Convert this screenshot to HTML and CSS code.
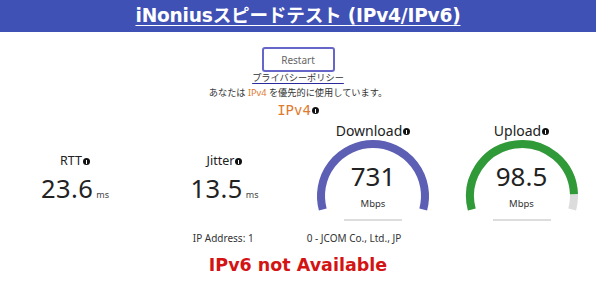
FILE: index.html
```html
<!DOCTYPE html>
<html lang="ja">
<head>
<meta charset="utf-8">
<title>iNonius</title>
<link rel="stylesheet" href="styles.css">
</head>
<body>
<header class="top">
  <a class="title">iNoniusスピードテスト (IPv4/IPv6)</a>
</header>
<main class="main">
  <button class="restart">Restart</button>
  <a class="privacy">プライバシーポリシー</a>
  <p class="pref">あなたは <span class="orange">IPv4</span> を優先的に使用しています。</p>
  <div class="proto">IPv4<span class="info"></span></div>
  <section class="metrics">
    <div class="stat">
      <div class="label">RTT<span class="info"></span></div>
      <div class="value"><span class="num">23.6</span><span class="unit">ms</span></div>
    </div>
    <div class="stat">
      <div class="label">Jitter<span class="info"></span></div>
      <div class="value"><span class="num">13.5</span><span class="unit">ms</span></div>
    </div>
    <div class="gauge">
      <div class="glabel">Download<span class="info"></span></div>
      <div class="dial">
        <svg width="120" height="76" viewBox="0 0 120 76">
          <path d="M 9.77 70.46 A 52 52 0 1 1 110.23 70.46" fill="none" stroke="#5c5fb3" stroke-width="8"/>
        </svg>
        <div class="gnum">731</div>
        <div class="gunit">Mbps</div>
      </div>
      <div class="gbar"></div>
    </div>
    <div class="gauge">
      <div class="glabel">Upload<span class="info"></span></div>
      <div class="dial">
        <svg width="120" height="76" viewBox="0 0 120 76">
          <path d="M 9.77 70.46 A 52 52 0 1 1 110.23 70.46" fill="none" stroke="#dcdcdc" stroke-width="8"/>
          <path d="M 9.77 70.46 A 52 52 0 1 1 111.97 55.19" fill="none" stroke="#2f9a37" stroke-width="8"/>
        </svg>
        <div class="gnum">98.5</div>
        <div class="gunit">Mbps</div>
      </div>
      <div class="gbar"></div>
    </div>
  </section>
  <p class="ip">IP Address: 1<span class="redact"></span>0 - JCOM Co., Ltd., JP</p>
  <p class="v6">IPv6 not Available</p>
</main>
</body>
</html>
```
FILE: styles.css
```css
html, body {
  margin: 0;
  padding: 0;
  background: #fff;
}
body {
  font-family: "Noto Sans", "Noto Sans CJK JP", sans-serif;
  color: #222;
  width: 596px;
  height: 293px;
  overflow: hidden;
}
.top {
  background: #3f51b5;
  height: 32px;
  display: flex;
  justify-content: center;
  align-items: center;
}
.title {
  color: #fff;
  font-family: "DejaVu Sans", "Noto Sans CJK JP", sans-serif;
  font-weight: bold;
  font-size: 18.6px;
  line-height: 22px;
  text-decoration: underline;
  text-decoration-thickness: 1px;
  text-underline-offset: 3px;
  letter-spacing: -0.2px;
}
.main {
  display: flex;
  flex-direction: column;
  align-items: center;
}
.restart {
  margin-top: 15px;
  width: 73px;
  height: 25px;
  border: 2px solid #6666c8;
  border-radius: 3px;
  background: #fff;
  color: #666;
  font-family: "Noto Sans", sans-serif;
  font-size: 10px;
  padding: 0;
}
.privacy {
  font-size: 9.2px;
  line-height: 12px;
  color: #333;
  text-decoration: underline;
  text-decoration-color: #2a2a9a;
  text-underline-offset: 2px;
}
.pref {
  margin: 3px 0 0;
  font-size: 9.2px;
  line-height: 12px;
  color: #333;
}
.orange { color: #e07a30; }
.proto {
  margin-top: 2px;
  font-family: "DejaVu Sans Mono", "Liberation Mono", monospace;
  font-size: 14px;
  line-height: 18px;
  color: #e07a30;
  display: flex;
  align-items: center;
}
.info {
  display: inline-block;
  width: 7px;
  height: 7px;
  border-radius: 50%;
  background: #111;
  margin-left: 1px;
  position: relative;
  vertical-align: middle;
}
.info::after {
  content: "";
  position: absolute;
  left: 3px;
  top: 2px;
  width: 1px;
  height: 4px;
  background: #fff;
}
.metrics {
  margin-top: 4px;
  width: 596px;
  display: grid;
  grid-template-columns: 150px 149px 148px 149px;
}
.stat {
  padding-top: 30px;
  display: flex;
  flex-direction: column;
  align-items: center;
}
.label {
  font-size: 12.5px;
  line-height: 16px;
  display: flex;
  align-items: center;
}
.value {
  margin-top: 6px;
  display: flex;
  align-items: baseline;
}
.num {
  font-size: 25.5px;
  line-height: 26px;
  letter-spacing: 0.4px;
}
.unit {
  font-size: 9px;
  margin-left: 3px;
  color: #444;
}
.gauge {
  display: flex;
  flex-direction: column;
  align-items: center;
}
.glabel {
  font-size: 14px;
  line-height: 16px;
  display: flex;
  align-items: center;
}
.dial {
  position: relative;
  width: 120px;
  height: 76px;
}
.dial svg { display: block; }
.gnum {
  position: absolute;
  left: 0;
  right: 0;
  top: 23px;
  text-align: center;
  font-size: 26px;
  line-height: 28px;
}
.gunit {
  position: absolute;
  left: 0;
  right: 0;
  top: 58px;
  text-align: center;
  font-size: 9.5px;
  line-height: 14px;
  color: #333;
}
.gbar {
  margin-top: 4px;
  width: 58px;
  height: 2px;
  background: #ddd;
}
.ip {
  margin: 10px 0 0 -2px;
  font-size: 10px;
  line-height: 14px;
  color: #333;
  display: flex;
}
.redact {
  display: inline-block;
  width: 53px;
}
.v6 {
  margin: 10px 0 0;
  font-family: "DejaVu Sans", sans-serif;
  font-weight: bold;
  font-size: 17.5px;
  line-height: 20px;
  color: #d31414;
}
```
